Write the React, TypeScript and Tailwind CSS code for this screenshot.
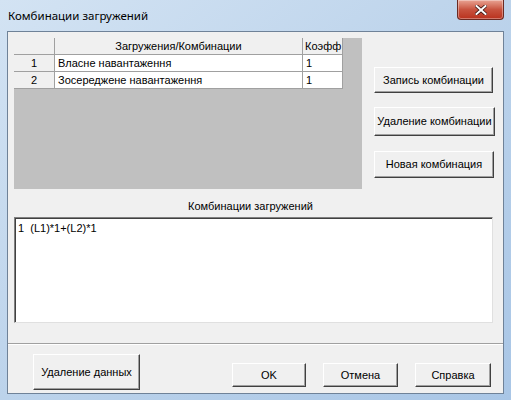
import React from 'react';

const rows = [
  { n: '1', name: 'Власне навантаження', k: '1' },
  { n: '2', name: 'Зосереджене навантаження', k: '1' },
];

// classic raised win32 button
function WinButton({ label, className }: { label: string; className: string }) {
  return (
    <button
      className={`flex items-center justify-center overflow-hidden whitespace-nowrap border border-t-white border-l-white border-b-[#404040] border-r-[#404040] bg-[#f0f0f0] text-[11px] text-black shadow-[inset_-1px_-1px_0_#a0a0a0] ${className}`}
    >
      {label}
    </button>
  );
}

export default function App() {
  return (
    <div
      className="flex h-[400px] w-[511px] flex-col bg-gradient-to-br from-[#d3e3f3] via-[#bcd3eb] to-[#a9c6e6] text-black"
      style={{ fontFamily: '"Liberation Sans", Arial, sans-serif' }}
    >
      {/* title bar */}
      <div className="flex h-[31px] items-start">
        <span className="ml-[8px] mt-[8px] text-[11.5px] leading-[16px] text-black" style={{ fontFamily: '"Noto Sans", "Liberation Sans", sans-serif' }}>
          Комбинации загружений
        </span>
        <div className="ml-auto mr-[7px] flex h-[20px] w-[47px] items-center justify-center rounded-b-[4px] border border-t-0 border-[#6b2a22] bg-gradient-to-b from-[#e8a393] via-[#c8533f] to-[#b9301c] shadow-[inset_0_0_0_1px_rgba(255,255,255,0.35)]">
          <svg width="12" height="10" viewBox="0 0 12 10">
            <path d="M1.5 1 L10.5 9 M10.5 1 L1.5 9" stroke="#3a1410" strokeWidth="3.6" strokeLinecap="square" />
            <path d="M1.5 1 L10.5 9 M10.5 1 L1.5 9" stroke="#ffffff" strokeWidth="2" strokeLinecap="square" />
          </svg>
        </div>
      </div>

      {/* client area */}
      <div className="mx-[7px] flex h-[363px] flex-col border border-[#6f8298] bg-[#f0f0f0]">
        <div className="flex pl-[6px] pt-[6px]">
          {/* grid */}
          <div className="h-[151px] w-[348px] bg-[#c0c0c0]">
            <div className="flex h-[17px] w-[329px] text-[11px] leading-[16px]">
              <div className="w-[41px] border-b border-r border-[#a0a0a0] bg-[#f0f0f0]" />
              <div className="w-[248px] border-b border-r border-[#a0a0a0] bg-[#f0f0f0] text-center">Загружения/Комбинации</div>
              <div className="w-[40px] border-b border-r border-[#a0a0a0] bg-[#f0f0f0] pl-[2px]">Коэфф</div>
            </div>
            {rows.map((r) => (
              <div key={r.n} className="flex h-[17px] w-[329px] text-[11px] leading-[16px]">
                <div className="w-[41px] border-b border-r border-[#a0a0a0] bg-[#f0f0f0] text-center">{r.n}</div>
                <div className="w-[248px] border-b border-r border-[#a0a0a0] bg-white pl-[3px]">{r.name}</div>
                <div className="w-[40px] border-b border-r border-[#a0a0a0] bg-white pl-[3px]">{r.k}</div>
              </div>
            ))}
          </div>
          {/* side buttons */}
          <div className="ml-[12px] flex flex-col pt-[29px]">
            <WinButton label="Запись комбинации" className="h-[26px] w-[119px]" />
            <WinButton label="Удаление комбинации" className="mt-[14px] h-[29px] w-[121px]" />
            <WinButton label="Новая комбинация" className="mt-[15px] h-[27px] w-[120px]" />
          </div>
        </div>

        <div className="mt-[9px] w-[479px] pl-[6px] text-center text-[11px] leading-[16px]">Комбинации загружений</div>

        <div className="ml-[6px] mt-[3px] h-[106px] w-[479px] border border-t-[#808080] border-l-[#808080] border-b-[#e0e0e0] border-r-[#e0e0e0] bg-white shadow-[inset_1px_1px_0_#404040] px-[3px] pt-[2px] text-[11px] leading-[16px]">
          1&nbsp; (L1)*1+(L2)*1
        </div>

        <div className="mt-[20px] h-[2px] border-t border-[#a0a0a0] bg-white" />

        <div className="flex items-start">
          <WinButton label="Удаление данных" className="ml-[25px] mt-[9px] h-[36px] w-[107px]" />
          <WinButton label="OK" className="ml-[92px] mt-[18px] h-[24px] w-[74px]" />
          <WinButton label="Отмена" className="ml-[17px] mt-[18px] h-[24px] w-[75px]" />
          <WinButton label="Справка" className="ml-[17px] mt-[18px] h-[24px] w-[76px]" />
        </div>
      </div>
    </div>
  );
}
